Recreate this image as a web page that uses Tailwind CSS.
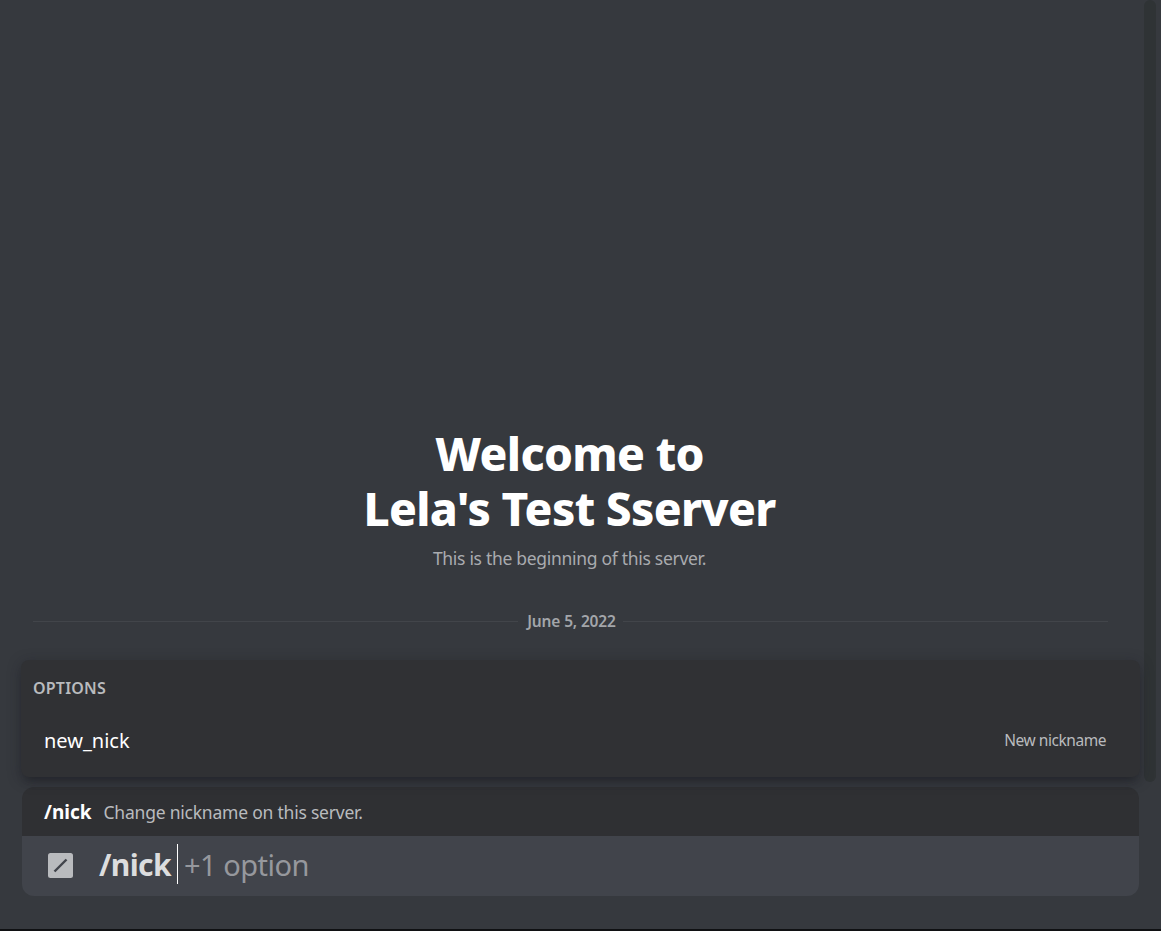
<!DOCTYPE html>
<html lang="en">
<head>
  <meta charset="UTF-8">
  <meta name="viewport" content="width=device-width, initial-scale=1.0">
  <script src="https://cdn.jsdelivr.net/npm/@tailwindcss/browser@4"></script>
  <title>Lela's Test Sserver</title>
</head>
<body class="h-screen overflow-hidden bg-[#36393e] font-['Noto_Sans',sans-serif] text-[#b9bbbe]">
  <div class="relative flex h-full flex-col justify-end border-b-2 border-[#101113]">

    <!-- Scrollbar -->
    <div class="absolute top-0 right-[5px] h-[782px] w-3 rounded-full bg-[#2f3335]"></div>

    <!-- Welcome -->
    <header class="mr-[22px] text-center">
      <h1 class="text-[46px] leading-[55px] font-extrabold tracking-[-0.65px] text-white">Welcome to<br>Lela's Test Sserver</h1>
      <p class="mt-2.5 text-[17.5px] leading-6 tracking-[-0.3px] text-[#a9abaf]">This is the beginning of this server.</p>
    </header>

    <!-- Date divider -->
    <div class="mt-[39px] mr-[53px] ml-[33px] flex h-6 items-center">
      <span class="h-px grow bg-[#42454a]"></span>
      <span class="pt-0.5 pr-[7px] pl-[9px] text-[15.5px] font-semibold tracking-[-0.15px] text-[#a3a6aa]">June 5, 2022</span>
      <span class="h-px grow bg-[#42454a]"></span>
    </div>

    <!-- Autocomplete -->
    <section class="relative z-10 mt-[27px] mr-[21px] ml-[21px] h-[117px] rounded-lg bg-[#303134] shadow-[0_3px_14px_rgba(24,26,34,0.4),0_8px_8px_-5px_rgba(20,22,24,0.4)]">
      <h2 class="px-3 pt-4 text-base leading-6 font-semibold tracking-[0.2px]">OPTIONS</h2>
      <div class="mt-[25px] flex items-center justify-between pr-[34px] pl-[23px]">
        <span class="text-xl leading-8 text-white">new_nick</span>
        <span class="text-[15.5px] tracking-[-0.45px]">New nickname</span>
      </div>
    </section>

    <!-- Command input -->
    <form class="relative mt-2.5 mr-[22px] mb-[33px] ml-[22px] overflow-hidden rounded-xl">
      <div class="flex h-[49px] items-center gap-3 bg-[#2f3033] pt-0.5 pl-[22px]">
        <strong class="text-[19px] font-bold text-white">/nick</strong>
        <span class="text-[17.5px] tracking-[-0.22px]">Change nickname on this server.</span>
      </div>
      <div class="flex h-[60px] items-center bg-[#41444b] pl-[26px] text-3xl">
        <svg class="mb-0.5 size-[25px]" viewBox="0 0 25 25" fill="none">
          <rect width="25" height="25" rx="2.5" fill="#b9bbbe" />
          <path d="M6.5 18.5L18.5 6.5" stroke="#41444b" stroke-width="2.4" />
        </svg>
        <strong class="ml-[26px] pb-0.5 font-bold tracking-[-0.6px] text-[#dcddde]">/nick</strong>
        <span class="mb-1 ml-1.5 h-10 w-px bg-white"></span>
        <span class="ml-[6px] pb-0.5 text-[29px] tracking-[-0.5px] text-[#96989d]">+1 option</span>
      </div>
    </form>
  </div>
</body>
</html>
